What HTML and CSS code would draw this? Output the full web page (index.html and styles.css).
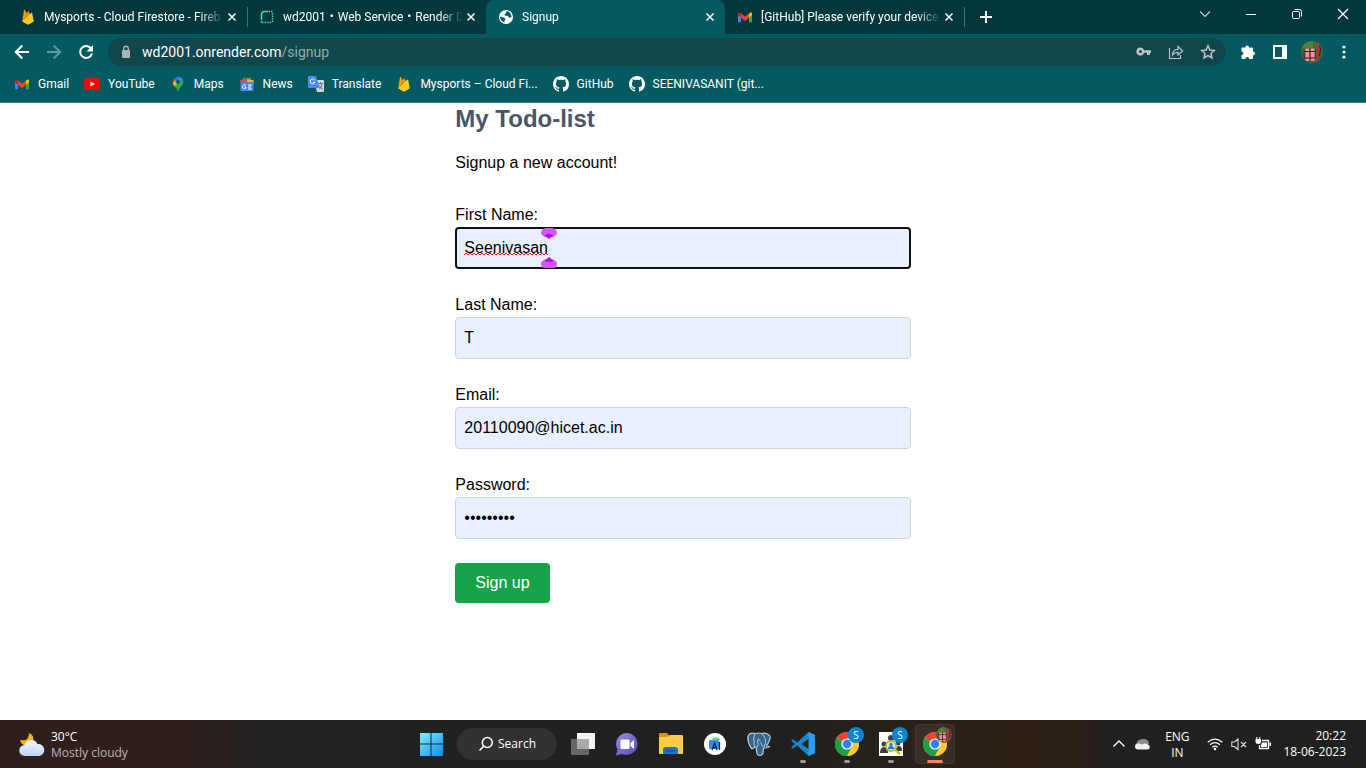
FILE: index.html
```html
<!DOCTYPE html>
<html lang="en">
<head>
<meta charset="utf-8">
<title>Signup</title>
<link rel="stylesheet" href="styles.css">
</head>
<body>
<svg class="defs" aria-hidden="true">
  <defs>
    <linearGradient id="winblue" x1="0" y1="0" x2="1" y2="1"><stop offset="0" stop-color="#7ff0fd"/><stop offset="1" stop-color="#0a8df5"/></linearGradient>
    <linearGradient id="cloudfill" x1="0" y1="0" x2="0" y2="1"><stop offset="0" stop-color="#f4f9ff"/><stop offset="1" stop-color="#b9d3f9"/></linearGradient>
    <linearGradient id="chatfill" x1="0" y1="0" x2="1" y2="1"><stop offset="0" stop-color="#a583e6"/><stop offset="1" stop-color="#4a4fb8"/></linearGradient>
    <symbol id="gmail" viewBox="0 0 16 16">
      <path d="M1 4v9.2h3V7L1 4z" fill="#4285f4"/><path d="M12 7v6.200h3V4z" fill="#34a853"/>
      <path d="M4 4.500v4.200L8 12l4-3.300V4.500L8 7.600z" fill="#ea4335"/>
      <path d="M1 4.600v1.600l3 2.500V4.500l-.800-.600C2.300 3.200 1 3.600 1 4.600z" fill="#c5221f"/>
      <path d="M15 4.600v1.600l-3 2.500V4.500l.800-.600c.900-.700 2.200-.300 2.200.700z" fill="#fbbc04"/>
    </symbol>
    <symbol id="firebase" viewBox="0 0 16 16">
      <path d="M2.200 12.600L4 1.100c.1-.4.600-.5.800-.1l2 3.600 1-2c.2-.4.600-.4.800 0l4.200 10z" fill="#ffa000"/>
      <path d="M2.200 12.600L8.600 6.200 6.800 4.600z" fill="#f57c00"/>
      <path d="M13.800 12.600L12.200 3.900c-.1-.4-.5-.5-.8-.2L2.200 12.600l5.200 2.900c.4.200.8.200 1.200 0z" fill="#ffca28"/>
    </symbol>
    <symbol id="github" viewBox="0 0 16 16"><path fill="#fff" d="M8 0C3.580 0 0 3.580 0 8c0 3.540 2.290 6.530 5.470 7.590.4.070.55-.17.55-.38 0-.19-.01-.82-.01-1.490-2.010.37-2.530-.49-2.690-.94-.09-.23-.48-.94-.82-1.130-.28-.15-.68-.52-.01-.53.63-.01 1.080.58 1.230.82.72 1.210 1.870.87 2.330.66.07-.52.28-.87.51-1.070-1.780-.2-3.640-.89-3.640-3.950 0-.87.31-1.590.82-2.150-.08-.2-.36-1.020.08-2.120 0 0 .67-.21 2.200.82.64-.18 1.320-.27 2-.27s1.360.09 2 .27c1.530-1.040 2.200-.82 2.200-.82.44 1.100.16 1.920.08 2.120.51.56.82 1.270.82 2.150 0 3.070-1.870 3.750-3.650 3.950.29.25.54.73.54 1.480 0 1.070-.01 1.930-.01 2.200 0 .21.15.46.55.38A8.010 8.010 0 0 0 16 8c0-4.420-3.580-8-8-8z"/></symbol>
    <symbol id="close" viewBox="0 0 16 16"><path d="M4.500 4.500l7 7m0-7l-7 7" stroke="#fff" stroke-width="1.500" fill="none"/></symbol>
    <symbol id="chrome" viewBox="0 0 24 24">
      <circle cx="12" cy="12" r="12" fill="#fcc934"/>
      <path d="M12 12L1.600 6A12 12 0 0 1 22.400 6z" fill="#ea4335"/>
      <path d="M12 12L1.600 6A12 12 0 0 0 12 24l5.200-9z" fill="#1e9e48"/>
      <path d="M12 6.500h10.600A12 12 0 0 1 12 24l4.800-9.200z" fill="#fcc934"/>
      <circle cx="12" cy="12" r="5.600" fill="#fff"/><circle cx="12" cy="12" r="4.400" fill="#2f80ed"/>
    </symbol>
    <symbol id="avatar" viewBox="0 0 22 22">
      <clipPath id="face"><circle cx="11" cy="11" r="11"/></clipPath>
      <g clip-path="url(#face)"><path d="M0 0h22v22H0z" fill="#3f6b2c"/><path d="M0 0h12v7H0z" fill="#52803b"/>
      <path d="M4.500 7.500h4V20h-4zM9.500 7.500h4V20h-4z" fill="#f0929f"/><path d="M3 10.500h11M4 17h10" stroke="#3b1420"/><path d="M9 7v13" stroke="#5a2030"/><path d="M2 12h2v6H3zM14 8h1v9h-1z" fill="#7c2439"/>
      <path d="M15 2.500l3 1-1 11-3 6" fill="none" stroke="#d31c60" stroke-width="1.600"/><path d="M18.500 5l1 3-1 7" stroke="#34122a" fill="none"/></g>
    </symbol>
  </defs>
</svg>

<header class="browser">
  <div class="tabstrip">
    <div class="tabs">
      <div class="tab">
        <svg class="i16"><use href="#firebase"/></svg><span class="tab-title">Mysports - Cloud Firestore - Fireb</span>
        <button class="tab-close" aria-label="Close tab"><svg class="i16"><use href="#close"/></svg></button>
      </div>
      <div class="tab divided">
        <svg class="i16" viewBox="0 0 16 16"><path d="M2.500 11V6q0-3.500 3.500-3.500h3" fill="none" stroke="#3ddc97" stroke-width="1.600"/><path d="M9.500 2.500H14M13.500 4v10M2.500 12v2M3 13.500h10" fill="none" stroke="#3ddc97" stroke-width="1.500" stroke-dasharray="1.500 1"/></svg>
        <span class="tab-title">wd2001・Web Service・Render D</span>
        <button class="tab-close" aria-label="Close tab"><svg class="i16"><use href="#close"/></svg></button>
      </div>
      <div class="tab active">
        <svg class="i16" viewBox="0 0 16 16"><circle cx="8" cy="8" r="7" fill="#fff"/><path d="M2 7.600l2 .4 2.500.800 1 1.700-1 1.200v1.800C3.600 12.800 2 10.500 2 7.600zM8.500 2l-.300 2L6.500 5l.3 1.500 3 .4 1.200 1.500 2.500.200C13.600 5 12 2.500 8.500 2z" fill="#045a60"/></svg>
        <span class="tab-title">Signup</span>
        <button class="tab-close" aria-label="Close tab"><svg class="i16"><use href="#close"/></svg></button>
      </div>
      <div class="tab">
        <svg class="i16"><use href="#gmail"/></svg><span class="tab-title">[GitHub] Please verify your device</span>
        <button class="tab-close" aria-label="Close tab"><svg class="i16"><use href="#close"/></svg></button>
      </div>
      <button class="new-tab divided" aria-label="New tab"><svg class="i16" viewBox="0 0 16 16"><path d="M8 2v12M2 8h12" stroke="#fff" stroke-width="2"/></svg></button>
    </div>
    <div class="window-controls">
      <button aria-label="Search tabs"><svg class="i16" viewBox="0 0 16 16"><path d="M3 5.500l5 5 5-5" fill="none" stroke="#c5d4d5" stroke-width="1.100"/></svg></button>
      <button aria-label="Minimize"><svg class="i16" viewBox="0 0 16 16"><path d="M3 8.500h10" stroke="#fff"/></svg></button>
      <button aria-label="Restore"><svg class="i16" viewBox="0 0 16 16"><rect x="3.500" y="5.500" width="7" height="7" rx="1" fill="none" stroke="#fff"/><path d="M5.500 3.500h5q2 0 2 2v5" fill="none" stroke="#fff"/></svg></button>
      <button aria-label="Close"><svg class="i16" viewBox="0 0 16 16"><path d="M3 3l10 10M13 3L3 13" stroke="#fff" stroke-width="1.200"/></svg></button>
    </div>
  </div>

  <div class="toolbar">
    <div class="tools">
      <button aria-label="Back"><svg class="i16" viewBox="0 0 16 16"><path d="M15 8H2M8.300 1.500L1.800 8l6.500 6.500" fill="none" stroke="#fff" stroke-width="2"/></svg></button>
      <button aria-label="Forward"><svg class="i16" viewBox="0 0 16 16"><path d="M1 8h13M7.700 1.500L14.200 8l-6.500 6.500" fill="none" stroke="#5f9a9e" stroke-width="2"/></svg></button>
      <button aria-label="Reload"><svg class="i16" viewBox="0 0 16 16"><path d="M13.200 4.600A6 6 0 1 0 14 9.500" fill="none" stroke="#fff" stroke-width="2"/><path d="M15 1v6.500H8.500z" fill="#fff"/></svg></button>
    </div>
    <div class="omnibox">
      <svg class="i16" viewBox="0 0 16 16"><rect x="4" y="6" width="8" height="8" rx="1" fill="#aab3b6"/><path d="M5.700 6V4.500a2.300 2.300 0 0 1 4.600 0V6" fill="none" stroke="#aab3b6" stroke-width="1.400"/></svg>
      <div class="url">wd2001.onrender.com<span>/signup</span></div>
      <div class="tools">
        <button aria-label="Passwords"><svg class="i16" viewBox="0 0 16 16"><path d="M4.500 3.500a4 4 0 1 0 3.700 5.300H11V11h3V8.800h1V6.200H8.200a4 4 0 0 0-3.700-2.700zm0 2.500a1.500 1.500 0 1 1 0 3 1.500 1.500 0 0 1 0-3z" fill="#bcc3c6"/></svg></button>
        <button aria-label="Share"><svg class="i16" viewBox="0 0 16 16"><path d="M1.500 4v10.500h11V11M4.500 11C4.700 7 7 5.300 10 5.300V2.500L14.700 7 10 11V8.400C7.600 8.400 6 9 4.500 11z" fill="none" stroke="#bcc3c6" stroke-width="1.200"/></svg></button>
        <button aria-label="Bookmark"><svg class="i16" viewBox="0 0 16 16"><path d="M8 1.800l1.900 4.200 4.500.500-3.400 3 1 4.500L8 11.700 4 14l1-4.500-3.400-3L6.100 6z" fill="none" stroke="#bcc3c6" stroke-width="1.500"/></svg></button>
      </div>
    </div>
    <div class="tools">
      <button aria-label="Extensions"><svg class="i16" viewBox="0 0 16 16"><path d="M1.500 4.500q0-1 1-1H5.300a1.900 1.900 0 0 1 3.800 0H12q1 0 1 1v3a1.900 1.900 0 0 1 0 3.800V14q0 1-1 1H9.200a1.900 1.900 0 0 0-3.800 0H2.500q-1 0-1-1v-2.800a1.900 1.900 0 0 0 0-3.800z" fill="#fff"/></svg></button>
      <button aria-label="Side panel"><svg class="i16" viewBox="0 0 16 16"><path d="M1 1h14v14H1zM3 3v10h7V3z" fill="#fff" fill-rule="evenodd"/></svg></button>
      <button aria-label="Profile"><svg class="i22"><use href="#avatar"/></svg></button>
      <button aria-label="Menu"><svg class="i16" viewBox="0 0 16 16"><g fill="#fff"><circle cx="8" cy="3" r="1.600"/><circle cx="8" cy="8" r="1.600"/><circle cx="8" cy="13" r="1.600"/></g></svg></button>
    </div>
  </div>

  <nav class="bookmarks">
    <a href="#"><svg class="i16"><use href="#gmail"/></svg>Gmail</a>
    <a href="#"><svg class="i16" viewBox="0 0 16 16"><rect y="2" width="16" height="12" rx="3" fill="#f00"/><path d="M6.300 5.400v5.200L11 8z" fill="#fff"/></svg>YouTube</a>
    <a href="#"><svg class="i16" viewBox="0 0 16 16"><path d="M2.800 6a5.300 5.300 0 0 0 1 3.200L7 5z" fill="#fbbc04"/><path d="M4.200 2.500A5.200 5.200 0 0 0 2.800 6.300L7 5z" fill="#ea4335"/><path d="M8 .7a5.200 5.200 0 0 0-4 1.800l3.200 2.800L11 1.500A6 6 0 0 0 8 .7z" fill="#1a73e8"/><path d="M9.700 1l-3 3.800 2.700 2.500 3.500-3.800A5 5 0 0 0 9.700 1z" fill="#4285f4"/><path d="M13 4l-9.300 5c1.300 2 3.200 3 3.600 5.400.2 1 1.200 1 1.400 0C9.200 11.200 13.200 10 13.200 6z" fill="#34a853"/><path d="M3 7.500l2.500-3 2 3-3.200 3z" fill="#fbbc04"/><circle cx="8" cy="6" r="1.900" fill="#045a60"/></svg>Maps</a>
    <a href="#"><svg class="i16" viewBox="0 0 16 16"><path d="M4 1.800h8V6H4z" fill="#34a853"/><path d="M1 4l8-2 1 4-8 2z" fill="#ea4335"/><path d="M8 3l7 1.500L14 8 8 7z" fill="#fbbc04"/><rect x="1.500" y="6" width="13" height="9" rx="1" fill="#4285f4"/><path d="M7 9.500a2 2 0 1 0 0 2.500v-1H5.500M9 9h4M9 11h3M9 13h4" fill="none" stroke="#fff"/></svg>News</a>
    <a href="#"><svg class="i16" viewBox="0 0 16 16"><path d="M6 4h9q1 0 1 1v10q0 1-1 1H9z" fill="#d5d8dc"/><path d="M1 0h7l4 12H1q-1 0-1-1V1q0-1 1-1z" fill="#4c8bf5"/><path d="M6.500 4a2.400 2.400 0 1 0 .3 2.400H5" fill="none" stroke="#fff"/><path d="M10 7.500h5M12.500 6v1.500M14 8q-.5 3-2.500 5M11.500 9.500l3 4" stroke="#687078" fill="none"/></svg>Translate</a>
    <a href="#"><svg class="i16"><use href="#firebase"/></svg>Mysports – Cloud Fi...</a>
    <a href="#"><svg class="i16"><use href="#github"/></svg>GitHub</a>
    <a href="#"><svg class="i16"><use href="#github"/></svg>SEENIVASANIT (git...</a>
  </nav>
</header>

<main class="page">
  <form class="signup">
    <h1>My Todo-list</h1>
    <p>Signup a new account!</p>
    <div class="field">
      <label for="first">First Name:</label>
      <div class="marked">
        <input class="focused" id="first" type="text" value="Seenivasan" spellcheck="false">
        <svg class="squiggle" viewBox="0 0 84 4"><defs><pattern id="zig" width="4" height="4" patternUnits="userSpaceOnUse"><path d="M-1 4l1-1 2-2 2 2 1 1" fill="none" stroke="#f00"/></pattern></defs><path d="M0 0h84v4H0z" fill="url(#zig)"/></svg>
        <svg class="caret" viewBox="0 0 16 40"><g fill="#cf58fb"><path d="M0 5q0-4 5-5h6q5 1 5 5 0 2-4 4H4Q0 7 0 5zM0 36q0 3 3 4h10q3-1 3-4 0-3-5-5H5q-5 2-5 5z"/></g><path d="M8 11L3.500 7.500Q8 4 12.500 7.500zM8 29l-4.500 4q4.500 2 9 0z" fill="#c000f5"/></svg>
      </div>
    </div>
    <div class="field"><label for="last">Last Name:</label><input id="last" type="text" value="T"></div>
    <div class="field"><label for="email">Email:</label><input id="email" type="email" value="20110090@hicet.ac.in"></div>
    <div class="field"><label for="pass">Password:</label><input id="pass" type="password" value="password1"></div>
    <button class="submit" type="button">Sign up</button>
  </form>
</main>

<footer class="taskbar">
  <div class="weather">
    <svg class="i26" viewBox="0 0 26 26"><path d="M10 1q7 3 3 10l-8 2q-3-1-4-5 9 2 9-7z" fill="#fbb11b"/><path d="M6 24a5.500 5.500 0 0 1-.5-11A7 7 0 0 1 18.500 12a6 6 0 0 1 1.500 12z" fill="url(#cloudfill)"/></svg>
    <div>30°C<br><span>Mostly cloudy</span></div>
  </div>
  <div class="apps">
    <button class="app" aria-label="Start"><svg class="i24" viewBox="0 0 24 24"><path d="M1 1h10.500v10.500H1zM12.500 1H24v10.500H12.500zM1 12.500h10.500V24H1zM12.500 12.500H24V24H12.500z" fill="url(#winblue)"/></svg></button>
    <button class="search"><svg class="i16" viewBox="0 0 16 16"><circle cx="9.300" cy="6.500" r="5" fill="none" stroke="#fff" stroke-width="1.500"/><path d="M5.700 10.200L1.500 14.500" stroke="#fff" stroke-width="1.600"/></svg>Search</button>
    <button class="app" aria-label="Task view"><svg class="i24" viewBox="0 0 24 24"><path d="M6 1h18v16H6z" fill="#f4f4f4"/><path d="M0 7h18v16H0z" fill="#666"/><path d="M6 7h12v10H6z" fill="#aaa"/></svg></button>
    <button class="app" aria-label="Chat"><svg class="i24" viewBox="0 0 24 24"><path d="M12 1a11 11 0 1 1-5 21l-6 1.500 1.500-6A11 11 0 0 1 12 1z" fill="url(#chatfill)"/><rect x="5.500" y="7.500" width="9" height="9.500" rx="1" fill="#fff"/><path d="M15.500 11l3.500-3v9l-3.500-3z" fill="#fff"/></svg></button>
    <button class="app" aria-label="File Explorer"><svg class="i24" viewBox="0 0 24 24"><path d="M0 2q0-1 1-1h7l2.500 3L8 7H0z" fill="#d89400"/><path d="M0 5h8l3-2h12q1 0 1 1v18H0z" fill="#fccc45"/><path d="M4 22v-4q0-3 3-3h9q3 0 3 3v4z" fill="#0d78cd"/><path d="M7 19h9" stroke="#075294"/></svg></button>
    <button class="app" aria-label="Android Studio"><svg class="i24" viewBox="0 0 24 24"><circle cx="12" cy="12" r="11" fill="#fff"/><rect x="6" y="8" width="10" height="9" rx="1" fill="#4285f4"/><path d="M9 8.500a4 3 0 0 1 8 0z" fill="#3ddc84"/><path d="M9 18l2.500-7 2.500 7M10 15.500h3M16.500 10v8" fill="none" stroke="#073042" stroke-width="1.300"/></svg></button>
    <button class="app" aria-label="PostgreSQL"><svg class="i24" viewBox="0 0 24 24"><path d="M8 1.500Q2 0 .8 5c0 4 1.700 8.500 3.300 11 1.200 1.300 2.300.5 3.400-1l2 .5c-.3 3 0 6 1.500 7.500 2 1 4.500.2 5-2l.5-5q5 0 6-1.500l-3-.8C22 10 24 5.500 22.500 3.500 20 .8 17 .8 15 1.500c-2.500-.6-4.500-.8-7 0z" fill="#336791" stroke="#b9cbd8" stroke-width="1.200"/><path d="M8 2Q6 5 7 9c.5 2-.5 4 1 5.500M15 2c3 3 4 6 3.500 8.500L17 15M10 15c2-1 1-4 .5-6 0-2 2-3 2.500 0M16 15c-1-2-2-2-2-5" fill="none" stroke="#b9cbd8"/></svg></button>
    <button class="app running" aria-label="Visual Studio Code"><svg class="i24" viewBox="0 0 24 24"><path d="M17.500 0L6.200 10.500 2 7.200 0 8.300 4 12l-4 3.700 2 1.100 4.200-3.300L17.500 24 24 21V3zM18 6.500v11L10.500 12z" fill="#1587cf" fill-rule="evenodd"/><path d="M17.500 0L24 3v18l-6.500 3z" fill="#2a9df0"/></svg></button>
    <button class="app running" aria-label="Chrome"><svg class="i24"><use href="#chrome"/></svg><span class="badge">S</span></button>
    <button class="app running" aria-label="People search"><svg class="i24" viewBox="0 0 24 24"><path d="M0 0h24v24H0z" fill="#fff"/><g fill="#3b3f46"><circle cx="12" cy="6" r="3"/><circle cx="5" cy="12" r="2.500"/><circle cx="19" cy="11" r="2.500"/><path d="M1 21q0-6 4-6t4 6zM7 12q2-4 5-3t5 4l-5 3zM17 19q0-5 3-5t3 5z"/></g><circle cx="12" cy="14" r="5" fill="#d9ecff" stroke="#a7c520" stroke-width="1.800"/><circle cx="12" cy="12.500" r="1.700" fill="#3370dc"/><path d="M9 17q0-3 3-3t3 3z" fill="#3370dc"/><path d="M16 18l5 4" stroke="#b7d11c" stroke-width="2.500"/></svg><span class="badge">S</span></button>
    <button class="app current" aria-label="Chrome, Signup"><svg class="i24"><use href="#chrome"/></svg><svg class="badge photo" viewBox="0 0 22 22"><use href="#avatar" width="22" height="22"/></svg></button>
  </div>
  <div class="tray">
    <svg class="i16" viewBox="0 0 16 16"><path d="M2.500 10.500L8 5l5.500 5.500" fill="none" stroke="#fff" stroke-width="1.300"/></svg>
    <svg class="i16" viewBox="0 0 16 16"><path d="M1 9Q2 3 8 3t6 5l-6 2z" fill="#8b8b8b"/><path d="M3 13.500a3 3 0 0 1 0-6q2-.5 4 1 3-2 6 0a2.600 2.600 0 0 1 0 5z" fill="#f1f1f1"/></svg>
    <div class="lang">ENG<br>IN</div>
    <svg class="i16" viewBox="0 0 16 16"><g fill="none" stroke="#fff" stroke-width="1.200"><path d="M.7 6.200q7.300-6 14.600 0M3 8.700q5-4.300 10 0M5.300 11.200q2.700-2.300 5.400 0"/></g><circle cx="8" cy="13" r="1.300" fill="#fff"/></svg>
    <svg class="i16" viewBox="0 0 16 16"><path d="M.8 6h2.700L7 3v10.500L3.500 10.500H.8zM10 6l5 5M15 6l-5 5" fill="none" stroke="#ddd" stroke-width="1.100"/></svg>
    <svg class="i16" viewBox="0 0 16 16"><path d="M7 4.500h6.500v8h-9V9" fill="none" stroke="#fff" stroke-width="1.300"/><path d="M7 6.500h5v4.500H6V9zM14.500 6.500H16v3.500h-1.500zM.5 3h5.500v3q0 2-2.700 2T.5 6zM1.300 1h1v2h-1zM4.200 1h1v2h-1z" fill="#fff"/></svg>
    <div class="clock">20:22<br>18-06-2023</div>
  </div>
</footer>
</body>
</html>
```

FILE: styles.css
```css
* { box-sizing: border-box; }

body {
  margin: 0;
  min-height: 100vh;
  display: flex;
  flex-direction: column;
  background: #fff;
  color: #000;
  font: 16px/24px "Liberation Sans", Arial, sans-serif;
}

button {
  border: 0;
  padding: 0;
  background: none;
  color: inherit;
  font: inherit;
}

svg { display: block; flex: none; }
.defs { position: absolute; width: 0; height: 0; }
.i16 { width: 16px; height: 16px; }
.i22 { width: 22px; height: 22px; }
.i24 { width: 24px; height: 24px; }
.i26 { width: 26px; height: 26px; }

/* Browser frame */
.browser {
  background: #045a60;
  border-bottom: 1px solid #3b7f84;
  color: #fff;
  font: 12px/16px Roboto, "Noto Sans CJK JP", sans-serif;
}

.tabstrip {
  display: flex;
  justify-content: space-between;
  height: 34px;
  padding-left: 8px;
  background: #02383c;
}

.tabs { display: flex; flex: 1; min-width: 0; }

.tab {
  display: flex;
  align-items: center;
  gap: 8px;
  flex: 0 1 239px;
  min-width: 0;
  padding: 0 7px 0 12px;
}

.tab.active { background: #045a60; border-radius: 8px 8px 0 0; }

.tab-title {
  flex: 1;
  margin-right: -8px;
  overflow: hidden;
  white-space: nowrap;
  mask-image: linear-gradient(to left, transparent, #000 24px);
}

.divided {
  background: linear-gradient(#4b7376, #4b7376) left center / 1px 20px no-repeat;
}

.new-tab { display: grid; place-items: center; width: 44px; }

.window-controls { display: flex; height: 28px; }
.window-controls button { display: grid; place-items: center; width: 46px; }

.toolbar {
  display: flex;
  align-items: center;
  gap: 6px;
  height: 36px;
  padding: 0 6px;
}

.tools { display: flex; }
.tools button { display: grid; place-items: center; width: 32px; height: 28px; }

.omnibox {
  flex: 1;
  display: flex;
  align-items: center;
  gap: 8px;
  height: 28px;
  padding: 0 2px 0 10px;
  border-radius: 14px;
  background: #10474d;
}

.url { flex: 1; font-size: 14px; line-height: 20px; }
.url span { color: #93aeb1; }

.bookmarks {
  display: flex;
  align-items: center;
  gap: 15px;
  height: 32px;
  padding: 0 14px 4px;
}

.bookmarks a {
  display: flex;
  align-items: center;
  gap: 8px;
  color: #fff;
  text-decoration: none;
  white-space: nowrap;
}

/* Signup page */
.page { flex: 1; }
.signup { width: 33.3333%; margin: 0 auto; }

.signup h1 {
  margin: 0 0 16px;
  color: #4b5563;
  font-size: 24px;
  line-height: 32px;
}

.signup p { margin: 0 0 28px; }
.field { margin-bottom: 24px; }
.field label { display: block; }

.field input {
  display: block;
  width: 100%;
  height: 42px;
  padding: 8px;
  border: 1px solid #d1d5db;
  border-radius: 4px;
  background: #e8f0fe;
  color: #000;
  font: inherit;
}

.field .focused { border: 2px solid #101010; padding: 7px; }

.marked { position: relative; }
.squiggle { position: absolute; left: 9px; top: 25px; width: 84px; height: 4px; }
.caret { position: absolute; left: 86px; top: 1px; width: 16px; height: 40px; }

.submit {
  height: 40px;
  padding: 0 20px;
  border-radius: 4px;
  background: #16a34a;
  color: #fff;
}

/* Taskbar */
.taskbar {
  display: grid;
  grid-template-columns: 1fr auto 1fr;
  align-items: center;
  height: 48px;
  background: linear-gradient(90deg, #2f1f1c 0, #2f1f1c 13%, #222 20%, #202020 55%, #2a2119 68%, #2f2014 75%, #2a2018 79%, #202020 82%);
  color: #fff;
  font: 12px/16px "Open Sans", sans-serif;
}

.weather { display: flex; align-items: center; gap: 6px; padding: 2px 0 0 19px; }
.weather span { color: #bdb5b3; }

.apps { display: flex; align-items: center; }

.app {
  position: relative;
  display: grid;
  place-items: center;
  width: 40px;
  height: 40px;
  margin: 0 2px;
  border-radius: 4px;
}

.app.current { background: #3a2d27; box-shadow: inset 0 0 0 1px #443831; }

.running::after,
.current::after {
  content: "";
  position: absolute;
  left: 17px;
  bottom: 1px;
  width: 6px;
  height: 3px;
  border-radius: 2px;
  background: #999;
}

.current::after { left: 12px; width: 16px; background: #f9806a; }

.badge {
  position: absolute;
  top: 3px;
  right: 3px;
  width: 16px;
  height: 16px;
  border-radius: 50%;
  background: #0a85d1;
  font-size: 10px;
  line-height: 16px;
}

.photo { background: none; }

.search {
  display: flex;
  align-items: center;
  justify-content: center;
  gap: 4px;
  width: 100px;
  height: 32px;
  margin: 0 4px;
  border-radius: 16px;
  background: #323232;
}

.tray {
  display: flex;
  align-items: center;
  justify-content: flex-end;
  gap: 8px;
  padding-right: 20px;
}

.lang { width: 36px; margin-right: 4px; padding-top: 2px; text-align: center; }
.clock { margin-left: 4px; text-align: right; }
```
